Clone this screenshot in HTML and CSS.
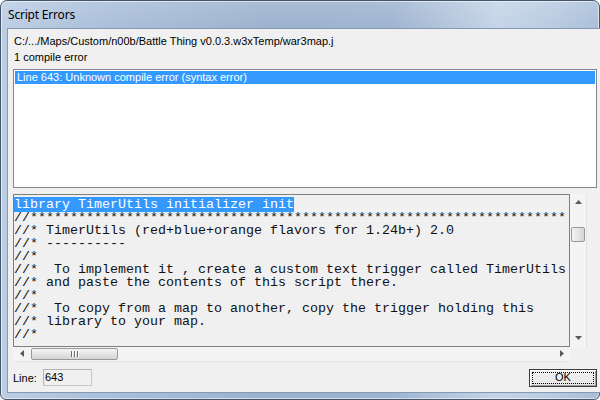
FILE: index.html
```html
<!DOCTYPE html>
<html>
<head>
<meta charset="utf-8">
<link rel="stylesheet" href="styles.css">
</head>
<body>
<div class="window">
  <div class="titlebar"><span class="title">Script Errors</span></div>
  <div class="client">
    <div class="label path">C:/.../Maps/Custom/n00b/Battle Thing v0.0.3.w3xTemp/war3map.j</div>
    <div class="label count">1 compile error</div>
    <div class="listbox">
      <div class="item selected">Line 643: Unknown compile error (syntax error)</div>
    </div>
    <div class="codebox">
      <div class="code"><pre><span class="hl">library TimerUtils initializer init</span>
//*******************************************************************
//* TimerUtils (red+blue+orange flavors for 1.24b+) 2.0
//* ----------
//*
//*  To implement it , create a custom text trigger called TimerUtils
//* and paste the contents of this script there.
//*
//*  To copy from a map to another, copy the trigger holding this
//* library to your map.
//*</pre></div>
      <div class="vscroll">
        <div class="sbtn"><svg width="7" height="4" viewBox="0 0 7 4"><path d="M0 4 L3.5 0 L7 4 Z" fill="#5a5a5a"/></svg></div>
        <div class="vthumb"></div>
        <div class="vtrack"></div>
        <div class="sbtn"><svg width="7" height="4" viewBox="0 0 7 4"><path d="M0 0 L3.5 4 L7 0 Z" fill="#5a5a5a"/></svg></div>
      </div>
      <div class="hscroll">
        <div class="hbtn"><svg width="4" height="7" viewBox="0 0 4 7"><path d="M4 0 L0 3.5 L4 7 Z" fill="#5a5a5a"/></svg></div>
        <div class="hthumb"><span class="grip"></span><span class="grip"></span><span class="grip"></span></div>
        <div class="htrack"></div>
        <div class="hbtn"><svg width="4" height="7" viewBox="0 0 4 7"><path d="M0 0 L4 3.5 L0 7 Z" fill="#5a5a5a"/></svg></div>
      </div>
      <div class="corner"></div>
    </div>
    <div class="bottom">
      <span class="line-label">Line:</span>
      <span class="line-field">643</span>
      <button class="ok"><span class="focus">OK</span></button>
    </div>
  </div>
</div>
</body>
</html>
```
FILE: styles.css
```css
html, body {
  margin: 0;
  padding: 0;
  background: #ffffff;
}

.window {
  width: 600px;
  height: 400px;
  box-sizing: border-box;
  border: 1px solid #46566a;
  border-radius: 7px 7px 6px 6px;
  padding: 0 6px 6px 6px;
  background:
    linear-gradient(to bottom, rgba(255,255,255,0.15), rgba(255,255,255,0) 30px),
    linear-gradient(to right, #bccee4 0%, #abc0da 15%, #9bb1cd 45%, #9db3cf 65%, #c4d4e7 83%, #b9cbe1 92%, #a8bed8 100%);
  box-shadow: inset 0 0 0 1px rgba(255,255,255,0.55);
  display: flex;
  flex-direction: column;
  font-family: "Liberation Sans", Arial, sans-serif;
}

.titlebar {
  height: 27px;
  display: flex;
  align-items: center;
  padding-left: 1px;
}

.title {
  font-family: "Noto Sans", "Liberation Sans", sans-serif;
  font-size: 12px;
  color: #000;
  letter-spacing: -0.2px;
}

.client {
  width: 584px;
  height: 363px;
  border: 1px solid #8799b0;
  background: #f0f0f0;
  padding: 0 5px 5px 5px;
  box-sizing: content-box;
  display: flex;
  flex-direction: column;
}

.client > * { flex: none; }

.label {
  font-size: 11px;
  line-height: 14px;
  height: 14px;
  color: #000;
  padding-left: 1px;
  white-space: nowrap;
}

.path { margin-top: 5px; }
.count { margin-top: 2px; }

.listbox {
  margin-top: 5px;
  height: 119px;
  box-sizing: border-box;
  border: 1px solid #828790;
  background: #ffffff;
  padding: 1px;
}

.item {
  font-size: 11px;
  line-height: 13px;
  height: 13px;
  padding-left: 2px;
  white-space: nowrap;
}

.item.selected {
  background: #3399ff;
  color: #ffffff;
}

.codebox {
  margin-top: 6px;
  height: 168px;
  display: grid;
  grid-template-columns: 557px 17px;
  grid-template-rows: 153px 15px;
}

.code {
  border: 1px solid #7f7f7f;
  background: #f0f0f0;
  overflow: hidden;
  padding-top: 3px;
}

.code pre {
  margin: 0;
  font-family: "Liberation Mono", "Courier New", monospace;
  font-size: 13.33px;
  line-height: 13px;
  color: #111;
  white-space: pre;
}

.hl {
  background: #3399ff;
  color: #ffffff;
}

.vscroll {
  background: #f4f4f4;
  border-right: 1px solid #e3e3e3;
  display: flex;
  flex-direction: column;
}

.sbtn {
  height: 17px;
  display: flex;
  align-items: center;
  justify-content: center;
  padding-left: 1px;
}

.vthumb {
  margin: 16px 1px 0 1px;
  height: 15px;
  box-sizing: border-box;
  border: 1px solid #999999;
  border-radius: 2px;
  background: linear-gradient(to right, #f4f4f4, #e2e2e2 60%, #d4d4d4);
}

.vtrack { flex: 1; }

.hscroll {
  background: #f4f4f4;
  border-bottom: 1px solid #e3e3e3;
  display: flex;
  align-items: stretch;
}

.hbtn {
  width: 17px;
  display: flex;
  align-items: center;
  justify-content: center;
}

.hthumb {
  margin: 1px 0 1px 1px;
  width: 87px;
  box-sizing: border-box;
  border: 1px solid #999999;
  border-radius: 2px;
  background: linear-gradient(to bottom, #f4f4f4, #e2e2e2 60%, #d4d4d4);
  display: flex;
  align-items: center;
  justify-content: center;
  gap: 2px;
}

.grip {
  width: 1px;
  height: 6px;
  background: #6e6e6e;
  box-shadow: 1px 0 0 #ffffff;
}

.htrack { flex: 1; }

.corner { background: #f0f0f0; }

.bottom {
  margin-top: 7px;
  height: 18px;
  display: flex;
  align-items: center;
  font-size: 11px;
}

.line-label {
  width: 30px;
  color: #000;
}

.line-field {
  width: 49px;
  height: 17px;
  box-sizing: border-box;
  border: 1px solid #c8c8c8;
  border-top-color: #b4b4b4;
  border-left-color: #b4b4b4;
  background: #f0f0f0;
  line-height: 15px;
  padding-left: 1px;
  color: #000;
}

.ok {
  margin-left: auto;
  width: 68px;
  height: 18px;
  box-sizing: border-box;
  border: 1px solid #3c3c3c;
  background: linear-gradient(to bottom, #f2f2f2, #e6e6e6);
  box-shadow: inset 1px 1px 0 #ffffff, inset -1px -1px 0 #a0a0a0;
  padding: 2px;
  display: flex;
  font-family: "Liberation Sans", Arial, sans-serif;
  font-size: 11px;
  color: #000;
}

.focus {
  flex: 1;
  border: 1px dotted #000;
  display: flex;
  align-items: center;
  justify-content: center;
  line-height: 11px;
}
```
